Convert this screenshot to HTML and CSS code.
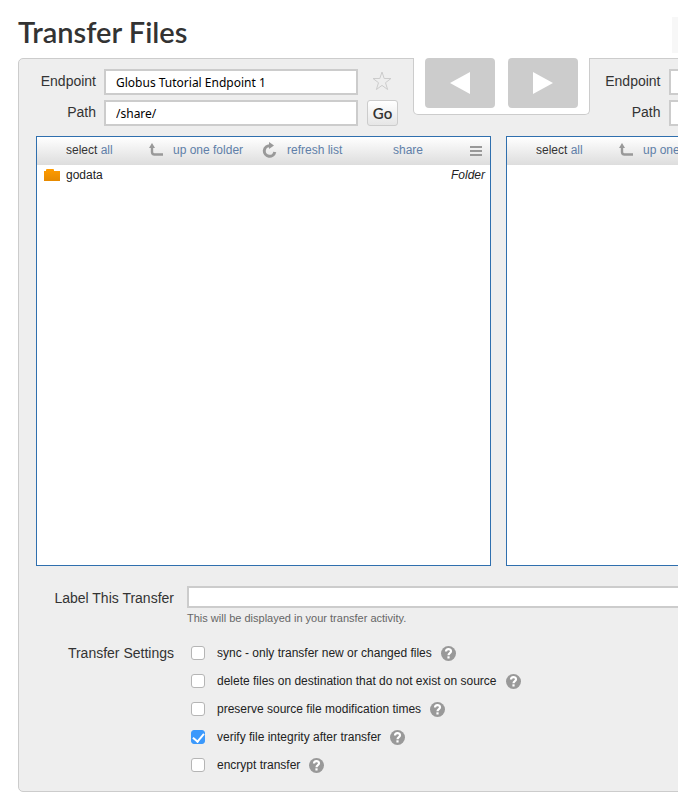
FILE: index.html
```html
<!DOCTYPE html>
<html lang="en">
<head>
<meta charset="utf-8">
<meta name="viewport" content="width=device-width, initial-scale=1">
<title>Transfer Files</title>
<link rel="stylesheet" href="styles.css">
</head>
<body>
<svg class="sprite" aria-hidden="true">
  <symbol id="icon-up" viewBox="0 0 14 14"><path d="M3 3v6q0 2.500 2.500 2.500H14" fill="none" stroke="#999" stroke-width="2.400"/><path d="M0 5 3 0l3 5z" fill="#999"/></symbol>
  <symbol id="icon-refresh" viewBox="0 0 15 16"><path d="M8 3.700A5.300 5.300 0 1 0 12.800 10" fill="none" stroke="#999" stroke-width="3"/><path d="M7 0l5 3.500-5 3.500z" fill="#999"/></symbol>
  <symbol id="icon-menu" viewBox="0 0 12 10"><path d="M0 1h12M0 5h12M0 9h12" stroke="#999" stroke-width="2"/></symbol>
  <symbol id="icon-help" viewBox="0 0 15 15"><circle cx="7.500" cy="7.500" r="7.500" fill="#999"/><path d="M5 5.500C5 2.400 10 2.400 10 5.300 10 7.200 7.500 7 7.500 9.200" fill="none" stroke="#fff" stroke-width="2.200"/><path d="M6.400 10.300h2.200v2.200H6.400z" fill="#fff"/></symbol>
</svg>
<main class="page">
  <header class="header">
    <h1 class="title">Transfer Files</h1>
    <div class="header-box"></div>
  </header>
  <div class="panel">
    <div class="top">
      <form class="endpoint">
        <label class="label" for="endpoint-a">Endpoint</label>
        <input class="field" id="endpoint-a" type="text" value="Globus Tutorial Endpoint 1">
        <button class="star" type="button" aria-label="Bookmark endpoint"><svg width="20" height="20" viewBox="0 0 20 20"><path d="M10 1l2.200 6.500H19l-5.500 4.200 2.100 6.800-5.600-4.100-5.600 4.100 2.100-6.800L1 7.500h6.800z" fill="none" stroke="#ccc"/></svg></button>
        <label class="label" for="path-a">Path</label>
        <input class="field" id="path-a" type="text" value="/share/">
        <button class="go" type="button">Go</button>
      </form>
      <div class="direction">
        <button class="move" type="button" aria-label="Transfer left"><svg width="20" height="24" viewBox="0 0 20 24"><path d="M20 1v22L0 12z" fill="#fff"/></svg></button>
        <button class="move" type="button" aria-label="Transfer right"><svg width="20" height="24" viewBox="0 0 20 24"><path d="M0 1v22l20-11z" fill="#fff"/></svg></button>
      </div>
      <form class="endpoint endpoint-right">
        <label class="label" for="endpoint-b">Endpoint</label>
        <input class="field" id="endpoint-b" type="text">
        <span></span>
        <label class="label" for="path-b">Path</label>
        <input class="field" id="path-b" type="text">
        <button class="go" type="button">Go</button>
      </form>
    </div>
    <div class="panes">
      <section class="pane">
        <nav class="toolbar">
          <span class="select">select <a href="#">all</a></span>
          <a class="tool up" href="#"><svg width="14" height="14"><use href="#icon-up"/></svg>up one folder</a>
          <a class="tool refresh" href="#"><svg width="15" height="16"><use href="#icon-refresh"/></svg>refresh list</a>
          <a class="share" href="#">share</a>
          <button class="menu" type="button" aria-label="Menu"><svg width="12" height="10"><use href="#icon-menu"/></svg></button>
        </nav>
        <div class="file">
          <svg width="16" height="12" viewBox="0 0 16 12"><defs><linearGradient id="folder" x2="0" y2="1"><stop stop-color="#ff9c00"/><stop offset="1" stop-color="#e68a00"/></linearGradient></defs><path d="M0 2h2V1q0-1 1-1h6q1 0 1 1v1h6v10H0z" fill="url(#folder)"/></svg>
          <span>godata</span>
          <em class="kind">Folder</em>
        </div>
      </section>
      <section class="pane">
        <nav class="toolbar">
          <span class="select">select <a href="#">all</a></span>
          <a class="tool up" href="#"><svg width="14" height="14"><use href="#icon-up"/></svg>up one folder</a>
        </nav>
      </section>
    </div>
    <form class="settings">
      <label class="label" for="transfer-label">Label This Transfer</label>
      <div>
        <input class="field field-label" id="transfer-label" type="text">
        <p class="hint">This will be displayed in your transfer activity.</p>
      </div>
      <span class="label" id="settings-label">Transfer Settings</span>
      <div class="options" role="group" aria-labelledby="settings-label">
        <div class="option"><input class="check" type="checkbox" id="sync"><label for="sync">sync - only transfer new or changed files</label><svg width="15" height="15"><use href="#icon-help"/></svg></div>
        <div class="option"><input class="check" type="checkbox" id="delete"><label for="delete">delete files on destination that do not exist on source</label><svg width="15" height="15"><use href="#icon-help"/></svg></div>
        <div class="option"><input class="check" type="checkbox" id="preserve"><label for="preserve">preserve source file modification times</label><svg width="15" height="15"><use href="#icon-help"/></svg></div>
        <div class="option"><input class="check" type="checkbox" id="verify" checked><label for="verify">verify file integrity after transfer</label><svg width="15" height="15"><use href="#icon-help"/></svg></div>
        <div class="option"><input class="check" type="checkbox" id="encrypt"><label for="encrypt">encrypt transfer</label><svg width="15" height="15"><use href="#icon-help"/></svg></div>
      </div>
    </form>
  </div>
</main>
</body>
</html>
```
FILE: styles.css
```css
* { box-sizing: border-box; }

body {
  margin: 0;
  background: #fff;
  color: #333;
  font: 12px/20px "Liberation Sans", Arial, sans-serif;
}

button {
  margin: 0;
  padding: 0;
  border: 0;
  background: none;
}

svg { display: block; flex: none; }

a { color: #5f7fa8; text-decoration: none; }

.sprite { display: none; }

.page {
  padding: 0 18px 12px;
  overflow: hidden;
}

.header, .panel { min-width: 961px; }

.header {
  display: flex;
  justify-content: space-between;
  align-items: center;
  height: 58px;
  padding-top: 12px;
}

.title {
  margin: 0;
  padding-bottom: 6px;
  font: 600 29px/32px Lato, sans-serif;
}

.header-box {
  width: 307px;
  height: 36px;
  background: #f7f7f7;
}

.panel {
  border: 1px solid #ccc;
  border-radius: 5px;
  background: #eee;
}

.top {
  display: grid;
  grid-template-columns: calc(50% - 86px) 177px 1fr;
  align-items: start;
  height: 77px;
}

.endpoint {
  display: grid;
  grid-template-columns: 77px 254px 31px;
  column-gap: 8px;
  row-gap: 5px;
  align-items: center;
  padding-top: 10px;
}

.endpoint-right { grid-template-columns: 71px 254px 31px; }

.label {
  font-size: 14px;
  text-align: right;
}

.endpoint .label { padding-bottom: 2px; }

.field {
  width: 100%;
  height: 26px;
  padding: 0 10px;
  border: 2px solid #ccc;
  background: #fff;
  color: #000;
  font: 12px "Noto Sans", sans-serif;
}

.star {
  justify-self: center;
  padding-bottom: 2px;
}

.go {
  height: 26px;
  width: 31px;
  margin-left: 1px;
  border: 1px solid #ccc;
  border-radius: 3px;
  background: linear-gradient(#fff, #e6e6e6);
  color: #333;
  font: 600 15px Lato, sans-serif;
}

.direction {
  display: flex;
  justify-content: center;
  gap: 13px;
  height: 57px;
  margin-top: -1px;
  border: solid #ccc;
  border-width: 0 1px 1px;
  border-radius: 0 0 5px 5px;
  background: #fff;
}

.move {
  display: grid;
  place-items: center;
  width: 70px;
  height: 50px;
  border-radius: 4px;
  background: #ccc;
}

.panes {
  display: grid;
  grid-template-columns: 1fr 1fr;
  gap: 15px;
  padding: 0 17px;
}

.pane {
  min-height: 430px;
  border: 1px solid #2f6fae;
  background: #fff;
}

.toolbar {
  display: flex;
  align-items: center;
  height: 28px;
  padding: 0 8px 2px 29px;
  background: linear-gradient(#fff, #ddd);
}

.select { width: 83px; }
.tool { display: flex; align-items: center; gap: 10px; }
.up { width: 113px; }
.refresh { width: 131px; }
.menu { margin-left: auto; padding-top: 2px; }

.file {
  display: flex;
  align-items: center;
  gap: 6px;
  padding: 0 5px 0 7px;
  color: #222;
}

.kind { margin-left: auto; }

.settings {
  display: grid;
  grid-template-columns: 155px 1fr;
  column-gap: 13px;
  padding: 20px 17px 12px 0;
}

.settings label.label { padding-top: 2px; }

.field-label {
  display: block;
  height: 22px;
}

.hint {
  margin: 0 0 15px;
  color: #666;
  font-size: 11px;
}

.options { padding-left: 4px; }

.option {
  display: flex;
  align-items: center;
  height: 28px;
}

.settings .options { margin-top: -4px; }

.option label { padding: 0 9px 0 12px; color: #222; }

.check {
  appearance: none;
  width: 14px;
  height: 14px;
  margin: 0;
  border: 1px solid #b5b5b5;
  border-radius: 3px;
  background: #fff;
}

.check:checked {
  display: grid;
  place-items: center;
  border-color: #3b99fc;
  background: #3b99fc;
}

.check:checked::before {
  content: "";
  width: 5px;
  height: 9px;
  margin-bottom: 2px;
  border: solid #fff;
  border-width: 0 2px 2px 0;
  transform: rotate(40deg);
}
```
